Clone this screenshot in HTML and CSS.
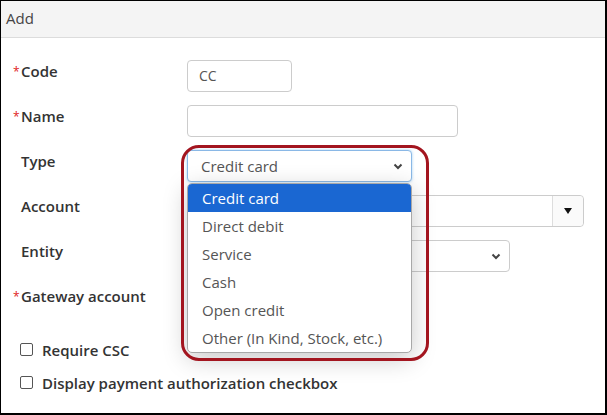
FILE: index.html
```html
<!DOCTYPE html>
<html>
<head>
<meta charset="utf-8">
<link rel="stylesheet" href="styles.css">
</head>
<body>
<div class="panel">
  <div class="panel-head">Add</div>
  <div class="form">
    <div class="row">
      <div class="label"><span class="req">*</span>Code</div>
      <div class="field"><div class="input w-code">CC</div></div>
    </div>
    <div class="row">
      <div class="label"><span class="req">*</span>Name</div>
      <div class="field"><div class="input w-name"></div></div>
    </div>
    <div class="row">
      <div class="label">Type</div>
      <div class="field">
        <div class="input select focus w-type">Credit card
          <svg class="chev" width="10" height="7" viewBox="0 0 10 7"><path d="M1.5 1.5 L5 5 L8.5 1.5" fill="none" stroke="#444" stroke-width="2"/></svg>
        </div>
      </div>
    </div>
    <div class="row">
      <div class="label">Account</div>
      <div class="field">
        <div class="combo">
          <div class="combo-text"></div>
          <div class="combo-btn"><span class="tri"></span></div>
        </div>
      </div>
    </div>
    <div class="row">
      <div class="label">Entity</div>
      <div class="field">
        <div class="input select w-entity">
          <svg class="chev" width="10" height="7" viewBox="0 0 10 7"><path d="M1.5 1.5 L5 5 L8.5 1.5" fill="none" stroke="#444" stroke-width="2"/></svg>
        </div>
      </div>
    </div>
    <div class="row">
      <div class="label"><span class="req">*</span>Gateway account</div>
      <div class="field"></div>
    </div>
    <div class="checks">
      <label class="check"><span class="box"></span>Require CSC</label>
      <label class="check"><span class="box"></span>Display payment authorization checkbox</label>
    </div>
  </div>

  <ul class="dropdown">
    <li class="sel">Credit card</li>
    <li>Direct debit</li>
    <li>Service</li>
    <li>Cash</li>
    <li>Open credit</li>
    <li>Other (In Kind, Stock, etc.)</li>
  </ul>
  <div class="highlight"></div>
</div>
</body>
</html>
```
FILE: styles.css
```css
* { box-sizing: border-box; }
html, body { margin: 0; padding: 0; background: #fff; }
body { font-family: "Open Sans", "Noto Sans", sans-serif; color: #333; }

.panel {
  position: relative;
  width: 607px;
  height: 415px;
  border-style: solid;
  border-color: #000;
  border-width: 1px 2px 2px 1px;
  overflow: hidden;
}
.panel-head {
  height: 37px;
  background: #f4f4f4;
  border-bottom: 1px solid #dcdcdc;
  padding-left: 5px;
  font-size: 15px;
  line-height: 35px;
  color: #444;
}
.form { padding-top: 22px; }
.row {
  display: flex;
  height: 45px;
}
.label {
  width: 186px;
  padding-left: 20px;
  padding-top: 1px;
  font-size: 15px;
  font-weight: 600;
  line-height: 20px;
  color: #333;
}
.req {
  display: inline-block;
  width: 8px;
  margin-left: -8px;
  color: #e02020;
  font-size: 12px;
  font-weight: 400;
  vertical-align: 1px;
}
.field { flex: 1; }
.input {
  position: relative;
  height: 32px;
  border: 1px solid #ccc;
  border-radius: 4px;
  padding-left: 11px;
  font-size: 15px;
  line-height: 30px;
  color: #555;
  background: #fff;
}
.w-code { width: 105px; font-size: 14px; }
.w-name { width: 271px; }
.w-type { width: 225px; padding-left: 13px; }
.w-entity { width: 323px; }
.focus {
  border-color: #8ab8e6;
  box-shadow: 0 0 3px rgba(102,175,233,.6);
}
.chev { position: absolute; right: 8px; top: 12px; }
.combo {
  display: flex;
  width: 397px;
  height: 32px;
  border: 1px solid #ccc;
  border-radius: 4px;
}
.combo-text { flex: 1; }
.combo-btn {
  width: 31px;
  border-left: 1px solid #ddd;
  background: #fafafa;
  border-radius: 0 4px 4px 0;
  display: flex;
  align-items: center;
  justify-content: center;
}
.tri {
  width: 0; height: 0;
  border-left: 4px solid transparent;
  border-right: 4px solid transparent;
  border-top: 6px solid #111;
}
.checks { padding-top: 3px; padding-left: 19px; }
.check {
  display: flex;
  align-items: center;
  height: 33px;
  font-size: 15px;
  font-weight: 600;
  color: #333;
}
.box {
  width: 13px; height: 13px;
  border: 1px solid #555;
  border-radius: 2px;
  margin-right: 9px;
}

.dropdown {
  position: absolute;
  left: 186px;
  top: 182px;
  width: 225px;
  margin: 0;
  padding: 0;
  list-style: none;
  border: 1px solid #a8a8a8;
  border-radius: 5px;
  background: #fff;
  box-shadow: 0 6px 24px rgba(0,0,0,.22);
  overflow: hidden;
}
.dropdown li {
  height: 28px;
  line-height: 28px;
  padding-left: 14px;
  font-size: 15px;
  color: #555;
}
.dropdown li.sel { background: #1a67d2; color: #fff; }
.highlight {
  position: absolute;
  left: 180px;
  top: 144px;
  width: 248px;
  height: 216px;
  border: 3px solid #a3151f;
  border-radius: 18px;
}
```
